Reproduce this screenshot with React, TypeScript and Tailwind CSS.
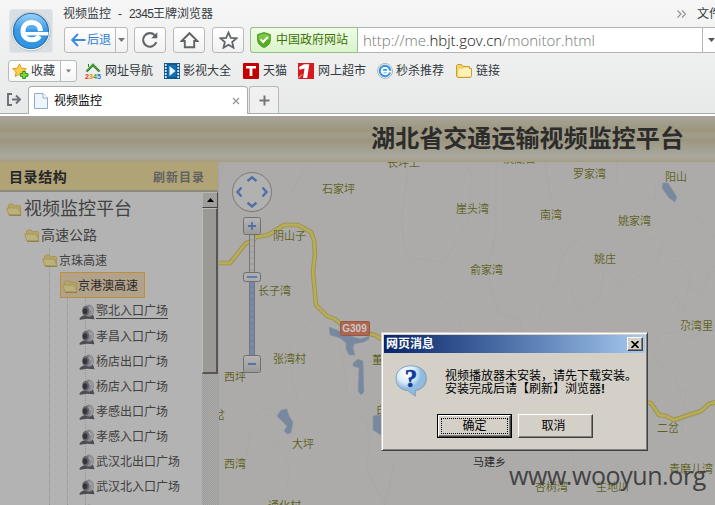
import React from "react";

const cjk = "font-['Liberation_Sans','Noto_Sans_CJK_SC',sans-serif]";

const BrowserLogo = () => (
  <div className="h-11 w-11 shrink-0 rounded-[3px] border border-[#e4e7ea] bg-[#d9dee3]">
    <svg viewBox="0 0 42 42" className="h-full w-full">
      <defs>
        <linearGradient id="lg" x1="0" y1="0" x2="0" y2="1">
          <stop offset="0" stopColor="#9fd4f8" />
          <stop offset="0.45" stopColor="#3b9ae6" />
          <stop offset="1" stopColor="#2c93e2" />
        </linearGradient>
      </defs>
      <circle cx="21" cy="21.5" r="19.3" fill="#f4f5f6" stroke="#b4bac0" strokeWidth="0.8" />
      <circle cx="21" cy="21" r="17.5" fill="url(#lg)" stroke="#2a6fb0" strokeWidth="1.2" />
      <path d="M30.4 21.2C30.2 15.4 26.4 12.6 21.6 12.6C16.4 12.6 13 16 13 21.2C13 26.6 16.8 29.8 21.8 29.8C25.2 29.8 27.8 28.6 29.6 26" fill="none" stroke="#fff" strokeWidth="5" />
      <path d="M13 22H38.4V25.4H13Z" fill="#fff" />
      <path d="M16.6 19.2C17 16.8 18.8 15.3 21.6 15.3C24.4 15.3 26.2 16.8 26.6 19.2Z" fill="#5babec" />
    </svg>
  </div>
);

const Caret = ({ className = "" }: { className?: string }) => (
  <svg width="7" height="4" viewBox="0 0 7 4" className={className}>
    <path d="M0 0H7L3.5 4Z" fill="currentColor" />
  </svg>
);

const toolBtn = "flex h-[26px] shrink-0 items-center justify-center rounded-[3px] border border-[#b9babc] bg-gradient-to-b from-white to-[#f1f1f1]";

const Folder = () => (
  <svg width="16" height="13" viewBox="0 0 16 13" className="shrink-0">
    <path d="M2.5 9V2.2L3.5 1H7L8.2 2.4H14L14.6 4V11H3Z" fill="#b3a56d" stroke="#ab9651" />
    <path d="M0.6 5H12.2L15 12H3Z" fill="#b9b17e" stroke="#ab9651" />
    <path d="M3.2 12.3H15" stroke="#8d793d" />
  </svg>
);

const Camera = () => (
  <svg width="16" height="16" viewBox="0 0 16 16" className="shrink-0">
    <path d="M0.3 15C2 11.5 6 11 9 11L14 10.5L15.5 15.3L8 14.8L1 15.8Z" fill="#4c4c52" />
    <ellipse cx="10" cy="6.7" rx="5.1" ry="6.1" fill="#85858a" />
    <path d="M10.5 1C14.5 1 15.3 5 14.4 9C13.5 11 12 11.8 10.5 12C12.5 8.5 12.7 4.5 10.5 1Z" fill="#98989b" />
    <ellipse cx="6.6" cy="7" rx="3.5" ry="5" fill="#65656b" />
    <ellipse cx="6.1" cy="7.2" rx="2.3" ry="3" fill="#34343b" />
    <path d="M10 3L11.8 6" stroke="#bababa" />
  </svg>
);

const Bookmark = ({ label, className, children }: { label: string; className: string; children: React.ReactNode }) => (
  <div className={`flex shrink-0 items-center ${className}`}>
    {children}
    <span className="whitespace-nowrap">{label}</span>
  </div>
);

const Chrome = () => (
  <header className="relative h-[116px] w-full overflow-hidden bg-gradient-to-b from-[#f6f6f6] to-[#e7e8e8] text-[12px] leading-[16px] text-[#333a40]">
    <div className="flex h-[56px] pl-[9px] pt-[9px]">
      <BrowserLogo />
      <div className="-mt-[9px] ml-[10px] w-[652px] shrink-0">
        <div className="flex h-[27px] items-center">
          <span className="w-[614px] shrink-0 whitespace-pre">
            视频监控<span className="inline-block w-[18px] text-center">-</span>
            <span className="inline-block w-[24px] tracking-[-0.6px]">2345</span>王牌浏览器
          </span>
          <svg width="9" height="8" viewBox="0 0 9 8" className="mr-[11px] shrink-0"><path d="M0.5 0.5L4 4L0.5 7.5M5 0.5L8.5 4L5 7.5" fill="none" stroke="#929497" strokeWidth="1.2" /></svg>
          <span className="shrink-0 whitespace-nowrap">文件</span>
        </div>
        <div className="flex">
          <div className={`${toolBtn} ml-[1px] w-[64px]`}>
            <span className="flex h-full w-[51px] items-center pl-[6px] text-[#2b7fd6]">
              <svg width="15" height="14" viewBox="0 0 15 14" className="mr-[1px] shrink-0"><path d="M7 1L1.2 7L7 13M1.5 7H14.5" fill="none" stroke="#3d8be0" strokeWidth="1.9" /></svg>
              <span className="whitespace-nowrap">后退</span>
            </span>
            <span className="flex h-full w-[12px] items-center justify-center border-l border-[#b9babc] text-[#777]"><Caret /></span>
          </div>
          <div className={`${toolBtn} ml-[6px] w-[32px]`}>
            <svg width="18" height="18" viewBox="0 0 18 18"><path d="M15.3 11.2A6.8 6.8 0 1 1 13.8 4.2L15 5.6" fill="none" stroke="#626567" strokeWidth="2.1" /><path d="M16.3 1.2V7.3H10.2Z" fill="#626567" /></svg>
          </div>
          <div className={`${toolBtn} ml-[7px] w-[32px]`}>
            <svg width="19" height="18" viewBox="0 0 19 18"><path d="M1.6 10L9.5 2.2L17.4 10H14.2V16.2H4.8V10Z" fill="none" stroke="#626567" strokeWidth="1.9" /></svg>
          </div>
          <div className={`${toolBtn} ml-[7px] w-[32px]`}>
            <svg width="19" height="18" viewBox="0 0 19 18"><path d="M9.5 1.5L11.8 6.8L17.6 7.3L13.2 11.1L14.5 16.7L9.5 13.7L4.5 16.7L5.8 11.1L1.4 7.3L7.2 6.8Z" fill="none" stroke="#626567" strokeWidth="1.8" /></svg>
          </div>
          <div className="ml-[6px] flex h-[26px] w-[468px] shrink-0 rounded-l-[3px] border border-[#b2b4b6] bg-white">
            <div className="-my-px -ml-px flex w-[108px] shrink-0 items-center rounded-l-[3px] border border-[#95c08d] bg-gradient-to-b from-[#f0fde9] to-[#d9f4c9] pl-[6px] text-[#3d7204]">
              <svg width="14" height="16" viewBox="0 0 14 16" className="mr-[5px] shrink-0"><path d="M7 0.6L13.3 2.6V8C13.3 12 10 14.5 7 15.4C4 14.5 0.7 12 0.7 8V2.6Z" fill="#58ad26" stroke="#4a981f" /><path d="M7 1.6L12.4 3.3V8H1.6V3.3Z" fill="#7cc844" /><path d="M3.5 7.4L6.2 10L10.8 4.8" fill="none" stroke="#fff" strokeWidth="2" /></svg>
              <span className="whitespace-nowrap">中国政府网站</span>
            </div>
            <div className="w-[344px] shrink-0 whitespace-nowrap pl-[5px] font-['Open_Sans',sans-serif] text-[15px] font-light leading-[25px] tracking-[-0.02px] text-[#777]">
              http://me.<span className="text-[#111]">hbjt.gov.cn</span>/monitor.html
            </div>
            <div className="flex w-[15px] items-center justify-center border-l border-[#b2b4b6] pl-[2px] text-[#555]"><Caret /></div>
          </div>
        </div>
      </div>
    </div>

    <div className="flex h-[29px] items-center pb-px pl-2 pt-[1px]">
      <div className="flex h-[22px] w-[69px] shrink-0 rounded-[3px] border border-[#b9babc] bg-gradient-to-b from-white to-[#f5f5f5]">
        <span className="flex w-[51px] items-center pl-[3px]">
          <svg width="17" height="16" viewBox="0 0 17 16" className="mr-[2px] shrink-0"><path d="M7.5 0.8L9.5 5.2L14.3 5.7L10.7 9L11.8 13.5L7.5 11.2L3.2 13.5L4.2 9L0.7 5.7L5.5 5.2Z" fill="#ffcf4a" stroke="#dc9d23" /><path d="M10.5 8.5H13.5V10.5H16V13.3H13.5V15.5H10.5V13.3H8.3V10.5H10.5Z" fill="#7bd53b" stroke="#34941c" /></svg>
          <span className="whitespace-nowrap">收藏</span>
        </span>
        <span className="flex w-4 items-center justify-center border-l border-[#b9babc] text-[#72777b]"><Caret className="w-[5px]" /></span>
      </div>
      <Bookmark label="网址导航" className="ml-2 w-[79px] gap-1">
        <svg width="16" height="16" viewBox="0 0 16 16"><path d="M1.5 8.5L8 2L14.5 8.5" fill="none" stroke="#2f7b26" strokeWidth="2.4" /><path d="M1.5 8L8 1.5L14.5 8" fill="none" stroke="#65bd4b" strokeWidth="0.9" /><path d="M3.5 4V1" stroke="#3a8331" fill="none" /><text x="0" y="15.5" fontSize="7.2" fontWeight="700" fontFamily="Liberation Sans"><tspan fill="#e52920">2</tspan><tspan fill="#e38f19">3</tspan><tspan fill="#3ba030">4</tspan><tspan fill="#3075cf">5</tspan></text></svg>
      </Bookmark>
      <Bookmark label="影视大全" className="w-[79px] gap-[3px]">
        <svg width="16" height="16" viewBox="0 0 16 16"><path d="M0 0H16V16H0Z" fill="#11578c" /><path d="M1.8 1V15M14.2 1V15" stroke="#c8e9ff" strokeWidth="1.8" strokeDasharray="2 1" /><path d="M4 2H12V14H4Z" fill="#176eae" /><path d="M5.5 3L11.5 8L5.5 13Z" fill="#e3f7ff" /></svg>
      </Bookmark>
      <Bookmark label="天猫" className="w-[55px] gap-1">
        <svg width="16" height="16" viewBox="0 0 16 16"><rect width="16" height="16" rx="1" fill="#c50000" /><path d="M3 3H13V5.5H9.4V13H6.6V5.5H3Z" fill="#fff" /></svg>
      </Bookmark>
      <Bookmark label="网上超市" className="w-[79px] gap-1">
        <svg width="16" height="16" viewBox="0 0 16 16"><path d="M0 0H16V16H0Z" fill="#d71920" /><path d="M1 4L6 1.2H11.3L9.2 15H5L6.6 5.4L1.6 6.8Z" fill="#fff" /><path d="M0 15.5L4 11.5" stroke="#fff" strokeWidth="0.8" /></svg>
      </Bookmark>
      <Bookmark label="秒杀推荐" className="w-[79px] gap-[3px]">
        <svg width="16" height="16" viewBox="0 0 16 16"><circle cx="8" cy="8" r="7.5" fill="#f7f7f7" stroke="#acb3b9" /><circle cx="8" cy="8" r="6.2" fill="#3594e3" /><path d="M14 8.7H5.7M11.3 8C11 5.5 9.5 4.8 8 4.8C6 4.8 4.7 6 4.7 8C4.7 10.2 6.2 11.3 8 11.3C9.5 11.3 10.6 10.7 11.2 9.5" fill="none" stroke="#fff" strokeWidth="1.7" /></svg>
      </Bookmark>
      <Bookmark label="链接" className="gap-1">
        <svg width="16" height="14" viewBox="0 0 16 14"><path d="M0.5 12.5V1.5L1.5 0.5H5.5L7 2.5H13.5V4.5H15.5V11.5L14.5 13.5H1.5Z" fill="#f5d465" stroke="#c79d33" /><path d="M2.5 12.5V6L3.5 4.8H7.2L8.2 3.7H13V5H15V11.5L14 12.5Z" fill="#fff2b8" /></svg>
      </Bookmark>
    </div>

    <div className="flex h-[29px] items-end border-b border-[#a8adb0] pl-[7px]">
      <svg width="15" height="13" viewBox="0 0 15 13" className="mb-[7px] mr-[6px] shrink-0"><path d="M5 1H1V12H5M5 6.5H13M9 2.5L13 6.5L9 10.5" fill="none" stroke="#6b7074" strokeWidth="1.9" /></svg>
      <div className="-mb-px flex h-[28px] w-[220px] items-center rounded-t-[4px] border border-b-0 border-[#a8adb0] bg-white pl-[5px] text-black">
        <svg width="14" height="16" viewBox="0 0 14 16" className="mr-[6px] shrink-0"><path d="M0.5 0.5H9L13.5 5V15.5H0.5Z" fill="#edf6ff" stroke="#90abc6" /><path d="M9 0.5V5H13.5" fill="#fff" stroke="#90abc6" /></svg>
        <span className="w-[173px] shrink-0 pt-px">视频监控</span>
        <svg width="8" height="8" viewBox="0 0 8 8" className="ml-[5px] shrink-0"><path d="M1 1L7 7M7 1L1 7" stroke="#999" strokeWidth="1.4" /></svg>
      </div>
      <div className="ml-[1px] flex h-[27px] w-[30px] items-center justify-center rounded-t-[3px] border border-b-0 border-[#b9babc] bg-[#f0f0f0]">
        <svg width="11" height="11" viewBox="0 0 11 11"><path d="M5.5 0.5V10.5M0.5 5.5H10.5" stroke="#777" strokeWidth="2" /></svg>
      </div>
    </div>
    <div className="h-[2px] bg-white" />
  </header>
);

const leaves = ["鄂北入口广场", "孝昌入口广场", "杨店出口广场", "杨店入口广场", "孝感出口广场", "孝感入口广场", "武汉北出口广场", "武汉北入口广场", ""];

const Guide = ({ className }: { className: string }) => <i className={`absolute bottom-0 w-0 border-l border-dotted border-[#949494] ${className}`} />;

const Sidebar = () => (
  <aside className="flex h-[343px] w-[218px] shrink-0 flex-col bg-[#b3b3b3]">
    <div className="flex h-[30px] shrink-0 items-center justify-between border-b-2 border-[#8e8a7b] bg-[#b0a477] pl-[9px] pr-[13px] pt-[2px] font-bold">
      <span className="text-[14px] tracking-[0.6px] text-[#282828]">目录结构</span>
      <span className="pt-[2px] text-[12px] tracking-[1px] text-[#626262]">刷新目录</span>
    </div>
    <div className="flex min-h-0 flex-1">
      <div className="relative w-[202px] overflow-hidden text-[12px] text-[#414141]">
        <Guide className="left-[49px] top-[56px]" />
        <Guide className="left-[67px] top-[106px]" />
        <Guide className="left-[85px] top-[106px]" />
        <div className="flex h-[31px] items-center pl-[6px] pt-[3px] text-[18px] leading-[24px]"><Folder /><span className="ml-[2px]">视频监控平台</span></div>
        <div className="flex h-[25px] items-center pl-6 text-[14px]"><Folder /><span className="ml-px">高速公路</span></div>
        <div className="relative flex h-[24px] items-center pl-[42px] pt-px"><Folder /><span className="ml-px">京珠高速</span></div>
        <div className="relative ml-[60px] flex h-[26px] w-[85px] items-center border border-[#bd8d42] bg-[#b3a28a] pl-[1px] pt-[2px] text-[#292929]"><Folder /><span>京港澳高速</span></div>
        {leaves.map((t, i) => (
          <div key={i} className="relative flex h-[25px] items-center whitespace-nowrap pl-[79px] pt-[2px]">
            <Camera />
            <span className={`ml-px leading-[14px] ${i === 0 ? "border-b border-[#414141]" : ""}`}>{t}</span>
          </div>
        ))}
      </div>
      <div className="flex w-4 flex-col bg-[#a5a5a3] bg-[repeating-conic-gradient(#9b9a97_0_25%,#adadad_0_50%)] bg-[length:2px_2px]">
        <div className="flex h-4 items-center justify-center border border-b-[#454545] border-l-[#b5b5b3] border-r-[#454545] border-t-[#b5b5b3] bg-[#a09f9b] text-black"><Caret className="rotate-180" /></div>
        <div className="h-[166px] border-b-2 border-l border-r-2 border-t border-b-[#555] border-l-[#bbb] border-r-[#555] border-t-[#bbb] bg-[#9b9994]" />
      </div>
    </div>
  </aside>
);

const places: [string, number, number][] = [
  ["长坪上", 387, 163], ["汉湖台", 503, 159], ["罗家湾", 573, 174], ["阳山", 665, 177],
  ["石家坪", 322, 189], ["崖头湾", 456, 209], ["南湾", 540, 215], ["姚家湾", 618, 221],
  ["阴山子", 273, 236], ["姚庄", 594, 259], ["俞家湾", 470, 270], ["长子湾", 258, 291],
  ["尕湾里", 680, 326], ["张湾村", 273, 359], ["西坪", 224, 377], ["董家", 372, 360],
  ["岔", 214, 415], ["白", 376, 410], ["大坪", 292, 444], ["西湾", 224, 464],
  ["二岔", 657, 428], ["青磨儿湾", 669, 469], ["杏树湾", 535, 487], ["生地川", 596, 487], ["通化村", 268, 506],
];

const MapControls = () => (
  <svg className="absolute left-0 top-0" width="60" height="343" viewBox="219 162 60 343">
    <defs>
      <linearGradient id="ctl" x1="0" y1="0" x2="0" y2="1"><stop offset="0" stopColor="#b5b5b5" /><stop offset="1" stopColor="#9a9a9a" /></linearGradient>
    </defs>
    <circle cx="252" cy="192.8" r="19.5" fill="#777" opacity="0.35" />
    <circle cx="252" cy="192" r="19.5" fill="#b1b1b1" stroke="#7b7b7b" />
    <path d="M247.5 181L252 177.3L256.5 181M247.5 202.7L252 206.4L256.5 202.7M241.5 187.5L237.5 192L241.5 196.5M262.5 187.5L266.5 192L262.5 196.5" fill="none" stroke="#506fa8" strokeWidth="2.4" />
    <path d="M249.5 230H254.5V360H249.5Z" fill="#aaa" stroke="#777" />
    <path d="M250 277H254V360H250Z" fill="#7689ab" />
    <path d="M250 240H254M250 246H254M250 252H254M250 258H254M250 264H254M250 270H254" stroke="#989898" />
    <path d="M250 287H254M250 293H254M250 299H254M250 305H254M250 311H254M250 317H254M250 323H254M250 329H254M250 335H254M250 341H254M250 347H254" stroke="#6b7f9f" />
    <rect x="243.5" y="217.5" width="17" height="17" rx="2" fill="url(#ctl)" stroke="#707070" />
    <path d="M248 226H256M252 222V230" stroke="#506fa8" strokeWidth="1.8" />
    <rect x="243.5" y="272.5" width="17" height="9" rx="2" fill="#adadad" stroke="#707070" />
    <path d="M247 277H257" stroke="#506fa8" strokeWidth="1.6" />
    <rect x="243.5" y="355.5" width="17" height="17" rx="2" fill="url(#ctl)" stroke="#707070" />
    <path d="M248 364H256" stroke="#506fa8" strokeWidth="1.8" />
  </svg>
);

const roads = "M219 263H230L246 243L253 241.5L256 237L268 235L284 225H298L311 232L314 240L315 254L313 272L316 305L327 316L335 319L342 325L360 332L375 335L386 342M640 402L651 403L659 415L666 416L674 420L701 411L709 404L716 402";

const MapView = () => (
  <section className="relative h-[343px] flex-1 overflow-hidden border-l border-[#a0a3a8] bg-[#acabaa]">
    <svg className="absolute left-0 top-0" width="496" height="343" viewBox="219 162 496 343">
      <g fill="none" stroke="#a5a7a6" strokeWidth="0.8">
        <path d="M408 167L405 195L402 215L403 245L412 260L430 285L447 302L461 325L463 333" />
        <path d="M465 162L473 180L470 185L470 215L458 238L445 260L440 262L413 258M496 162V235L488 262L490 285L500 313L520 319L523 333" />
        <path d="M545 162L551 200L545 215L562 230L574 240L594 255L621 287L640 275L656 263L664 243L657 237L650 240M574 240L560 260L558 280L540 312L537 323M558 282L570 288L577 311L599 299L604 270" />
        <path d="M617 162V183L630 193L655 200L655 187L666 181L688 205L715 238M668 260L680 262L690 275V289L700 293L715 265M668 310L677 295L679 310L683 311L688 287" />
        <path d="M308 162L290 195M312 320L290 345L289 360L297 400L275 415M340 345L347 388L341 401L365 420L370 435L367 470L385 505M276 408L250 435L245 463M257 460L277 441L289 465L287 490M277 407L262 410L250 420M425 457L440 450L451 460M572 450L574 465L570 480" />
        <path d="M715 325L690 338L675 331L660 335L652 350L658 365L672 372L680 390L686 390L682 430L698 447M219 180L225 162M382 470L395 460L385 505" />
      </g>
      <path d={roads} fill="none" stroke="#989155" strokeWidth="4.5" strokeLinejoin="round" />
      <path d={roads} fill="none" stroke="#b8ac55" strokeWidth="2.8" strokeLinejoin="round" />
      <g fill="#78899f" stroke="#8a95a2" strokeWidth="0.6">
        <path d="M329 327L337 330L346 334L354 337L361 339L369 336L369 339L364 342L354 344L353 348L355 355H349L346 349V343L340 338L330 335Z" />
        <path d="M353 363L358 359L363 361L364 392L361 395L358 391L359 368L353 366Z" />
        <path d="M277 416L281 410L287 409L289 416L293 422L291 433L287 434L284 431L287 426Z" />
        <path d="M663 183H668L677 197L675 202L669 198L662 188Z" />
        <path d="M373 416L384 414V437L373 430Z" />
      </g>
      <rect x="340.5" y="321.5" width="29" height="14" rx="1" fill="#ae6650" stroke="#985843" />
    </svg>
    <span className="absolute left-[121px] top-[160px] w-[29px] text-center text-[10px] font-bold leading-[13px] text-[#c9c9c9]">G309</span>
    {places.map(([name, x, y]) => (
      <span key={name} className="absolute whitespace-nowrap text-[11px] leading-[14px] text-[#5e611f] [text-shadow:0_0_1px_#bab9b6]" style={{ left: x - 219, top: y - 169 }}>{name}</span>
    ))}
    <span className="absolute left-[254px] top-[293px] text-[11px] leading-[14px] text-[#292929]">马建乡</span>
    <MapControls />
    <div className="absolute left-[290px] top-[291px] whitespace-nowrap font-['Open_Sans',sans-serif] text-[25px] leading-[44px] tracking-[-0.42px] text-[#434343]">www.wooyun.org</div>
  </section>
);

const raised = "border border-b-[#404040] border-l-white border-r-[#404040] border-t-white bg-[#d4d0c8] shadow-[inset_-1px_-1px_0_#808080]";

const Dialog = () => (
  <div className="absolute left-[381px] top-[332px] h-[119px] w-[267px] border border-b-[#404040] border-l-[#d4d0c8] border-r-[#404040] border-t-[#d4d0c8] bg-[#d4d0c8] p-[2px] text-[12px] leading-[13px] text-black shadow-[inset_1px_1px_0_white,inset_-1px_-1px_0_#808080]">
    <div className="flex h-[18px] items-center justify-between bg-gradient-to-r from-[#0a246a] to-[#a6caf0] pl-[2px] pr-[2px]">
      <span className="pt-px font-bold text-white">网页消息</span>
      <span className={`flex h-[14px] w-4 items-center justify-center ${raised}`}>
        <svg width="8" height="7" viewBox="0 0 8 7"><path d="M0.5 0L7.5 7M7.5 0L0.5 7" stroke="#000" strokeWidth="1.6" /></svg>
      </span>
    </div>
    <div className="flex h-[61px] pl-[11px] pt-[12px]">
      <svg width="33" height="33" viewBox="0 0 33 33" className="shrink-0">
        <defs><radialGradient id="bub" cx="35%" cy="25%"><stop offset="0" stopColor="#fff" /><stop offset="0.6" stopColor="#dcecfa" /><stop offset="1" stopColor="#91bbdf" /></radialGradient></defs>
        <path d="M17 1C26 1 32 6 32 14C32 20 27 25 21 26V32L13 26C5 25 1 20 1 13C1 5 8 1 17 1Z" fill="#77828e" opacity="0.45" />
        <path d="M16 0.8C25 0.8 31 5.8 31 13C31 20 26 24.5 20 25.5V31L13 25.6C5 25 1 20 1 13C1 5.8 7.5 0.8 16 0.8Z" fill="url(#bub)" stroke="#7ea4c7" />
        <text x="16" y="22" textAnchor="middle" fontFamily="Liberation Serif" fontWeight="700" fontSize="25" fill="#103b9d" stroke="#103b9d" strokeWidth="0.6">?</text>
      </svg>
      <div className="ml-[17px] whitespace-nowrap pt-[5px]">
        <div>视频播放器未安装，请先下载安装。</div>
        <div>安装完成后请【刷新】浏览器<b>!</b></div>
      </div>
    </div>
    <div className="flex gap-[6px] pl-[53px]">
      <button className="h-[24px] w-[75px] border border-black p-0">
        <span className={`flex h-full w-full p-[2px] ${raised}`}>
          <span className="flex h-full w-full items-center justify-center border border-dotted border-black">确定</span>
        </span>
      </button>
      <button className={`h-[24px] w-[75px] pr-[4px] ${raised}`}>取消</button>
    </div>
  </div>
);

export default function App() {
  return (
    <div className={`relative h-[505px] w-[715px] overflow-hidden bg-[#acabaa] ${cjk}`}>
      <Chrome />
      <div className="flex h-[46px] justify-end border-b border-[#a69e7e] bg-[linear-gradient(#a7a59b_0%,#a19c89_20%,#9d967d_32%,#a19d8b_42%,#9b967e_54%,#a3a091_72%,#aaa89e_90%,#a7a087_100%)] pr-[31px] text-[24px] font-bold leading-[46px] tracking-[0.07px] text-[#2c2c2c]">
        湖北省交通运输视频监控平台
      </div>
      <div className="flex h-[343px]">
        <Sidebar />
        <MapView />
      </div>
      <Dialog />
    </div>
  );
}
